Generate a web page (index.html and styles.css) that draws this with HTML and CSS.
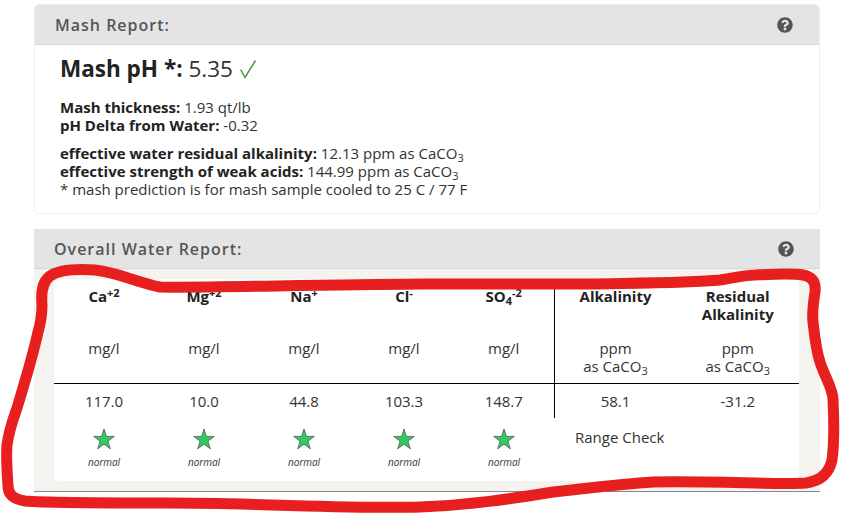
FILE: index.html
```html
<!DOCTYPE html>
<html lang="en">
<head>
<meta charset="utf-8">
<title>Mash and Water Report</title>
<link rel="stylesheet" href="styles.css">
</head>
<body>
<svg width="0" height="0" class="defs">
  <symbol id="help" viewBox="0 0 512 512"><path d="M504 256c0 136.997-111.043 248-248 248S8 392.997 8 256C8 119.083 119.043 8 256 8s248 111.083 248 248zM262.655 90c-54.497 0-89.255 22.957-116.549 63.758-3.536 5.286-2.353 12.415 2.715 16.258l34.699 26.31c5.205 3.947 12.621 3.008 16.665-2.122 17.864-22.658 30.113-35.797 57.303-35.797 20.429 0 45.698 13.148 45.698 32.958 0 14.976-12.363 22.667-32.534 33.976C247.128 238.528 216 254.941 216 296v4c0 6.627 5.373 12 12 12h56c6.627 0 12-5.373 12-12v-1.333c0-28.462 83.186-29.647 83.186-106.667 0-58.002-60.165-102-116.531-102zM256 338c-25.365 0-46 20.635-46 46 0 25.364 20.635 46 46 46s46-20.636 46-46c0-25.365-20.635-46-46-46z"/></symbol>
  <symbol id="star" viewBox="0 0 24 24"><polygon points="12,1 14.6,9.2 23.3,9.2 16.3,14.4 18.9,22.8 12,17.6 5.1,22.8 7.7,14.4 0.7,9.2 9.4,9.2"/></symbol>
</svg>
<main class="page">
  <section class="panel mash">
    <header class="panel-head">
      <h2>Mash Report:</h2>
      <svg class="help"><use href="#help"/></svg>
    </header>
    <div class="mash-body">
      <h1><b>Mash pH *:</b> 5.35 <svg class="check" viewBox="0 0 18 20"><path d="M1.5 10.5L6 18.5L16.5 1.5"/></svg></h1>
      <p><b>Mash thickness:</b> 1.93 qt/lb<br><b>pH Delta from Water:</b> -0.32</p>
      <p><b>effective water residual alkalinity:</b> 12.13 ppm as CaCO<sub>3</sub><br>
      <b>effective strength of weak acids:</b> 144.99 ppm as CaCO<sub>3</sub><br>
      * mash prediction is for mash sample cooled to 25 C / 77 F</p>
    </div>
  </section>

  <section class="panel water">
    <header class="panel-head">
      <h2>Overall Water Report:</h2>
      <svg class="help"><use href="#help"/></svg>
    </header>
    <div class="water-body">
      <table class="report">
        <thead>
          <tr class="names">
            <th>Ca<sup>+2</sup></th><th>Mg<sup>+2</sup></th><th>Na<sup>+</sup></th><th>Cl<sup>-</sup></th><th class="split">SO<sub>4</sub><sup>-2</sup></th>
            <th>Alkalinity</th><th>Residual<br>Alkalinity</th>
          </tr>
          <tr class="units">
            <td>mg/l</td><td>mg/l</td><td>mg/l</td><td>mg/l</td><td class="split">mg/l</td>
            <td>ppm<br>as CaCO<sub>3</sub></td><td>ppm<br>as CaCO<sub>3</sub></td>
          </tr>
        </thead>
        <tbody>
          <tr class="values">
            <td>117.0</td><td>10.0</td><td>44.8</td><td>103.3</td><td class="split">148.7</td><td>58.1</td><td>-31.2</td>
          </tr>
          <tr class="checks">
            <td><svg class="star"><use href="#star"/></svg><em>normal</em></td>
            <td><svg class="star"><use href="#star"/></svg><em>normal</em></td>
            <td><svg class="star"><use href="#star"/></svg><em>normal</em></td>
            <td><svg class="star"><use href="#star"/></svg><em>normal</em></td>
            <td><svg class="star"><use href="#star"/></svg><em>normal</em></td>
            <td colspan="2" class="range">Range Check</td>
          </tr>
        </tbody>
      </table>
    </div>
  </section>
</main>
<svg class="scribble" viewBox="0 0 841 515" aria-hidden="true">
  <path d="M42 305C41 292 42 282 50 276C60 269 80 269 95 270C115 272 140 283 160 287C200 288 300 285 420 284C480 284 540 284 587 284C640 283 690 283 720 280C735 278 745 275 755 275C775 274 792 273 803 275C813 277 816 283 815 292C813 305 812 315 813 322C815 340 816 350 820 362C825 378 833 388 833 400C834 420 834 445 832 460C829 474 820 481 806 483C780 485 720 481 653 482C620 484 590 488 553 492C510 499 470 505 420 507C350 509 260 503 167 503C110 503 50 503 25 501C13 499 8 494 8 486C7 470 6 458 7 445C9 430 12 422 17 408C24 385 33 355 38 332C41 322 42 315 42 305Z"/>
</svg>
</body>
</html>
```

FILE: styles.css
```css
* { box-sizing: border-box; }
html, body { margin: 0; padding: 0; background: #fff; }
body {
  width: 841px;
  height: 515px;
  overflow: hidden;
  position: relative;
  font-family: "Open Sans", sans-serif;
  font-size: 15px;
  line-height: 18px;
  color: #333;
}
.defs { position: absolute; }
.page { padding: 4px 21px 0 34px; }

.panel-head {
  height: 40px;
  display: flex;
  align-items: center;
  justify-content: space-between;
  padding: 0 26px 0 20px;
  background: #e4e4e4;
  border-bottom: 1px solid #d6d6d6;
}
.panel-head h2 {
  margin: 0;
  font-size: 16px;
  font-weight: 600;
  letter-spacing: 1px;
  color: #555;
}
.help { width: 16px; height: 16px; fill: #555; }

.mash {
  border: 1px solid #eeeeee;
  border-radius: 5px;
  overflow: hidden;
}
.mash-body { height: 168px; padding: 8px 25px 0; color: #333; }
.mash-body h1 {
  margin: 0 0 13px;
  font-size: 22.5px;
  line-height: 32px;
  font-weight: 400;
}
.mash-body b { color: #222; font-weight: 700; }
.mash-body p { margin: 0 0 10px; }
.check {
  display: inline-block;
  width: 18px;
  height: 20px;
  vertical-align: -2px;
  fill: none;
  stroke: #4a9a3f;
  stroke-width: 1.5;
}
sub { font-size: 11px; line-height: 0; vertical-align: -3px; }
sup { font-size: 11px; line-height: 0; vertical-align: 5px; }

.water { margin-top: 15px; }
.water-body {
  height: 223px;
  padding: 10px 20px;
  background: #f4f3ef;
  border-bottom: 1px solid #888;
}
.report {
  width: 745px;
  height: 202px;
  border-collapse: collapse;
  table-layout: fixed;
  background: #fff;
  border-radius: 5px;
}
.report th, .report td { padding: 0; text-align: center; vertical-align: top; font-weight: 400; }
.report th { font-weight: 700; color: #222; }
.report th:nth-child(-n+5), .report td:nth-child(-n+5) { width: 100px; }
.names th { height: 60px; padding-top: 8px; }
.units td { height: 44px; padding-top: 0; border-bottom: 1px solid #000; }
.values td { height: 35px; padding-top: 8px; }
.split { border-right: 1px solid #000; }
.checks td { border: 0; padding-top: 10px; }
.star { display: block; width: 22px; height: 22px; margin: 0 auto; fill: #2ecb62; stroke: #666; stroke-width: 1; }
.checks em { display: block; margin-top: 5px; font-size: 10px; line-height: 14px; color: #333; }
.checks .range { text-align: left; padding: 10px 0 0 21px; }

.scribble {
  position: absolute;
  left: 0;
  top: 0;
  width: 841px;
  height: 515px;
  fill: none;
  stroke: #e81f1f;
  stroke-width: 11;
  stroke-linejoin: round;
  pointer-events: none;
}
```
